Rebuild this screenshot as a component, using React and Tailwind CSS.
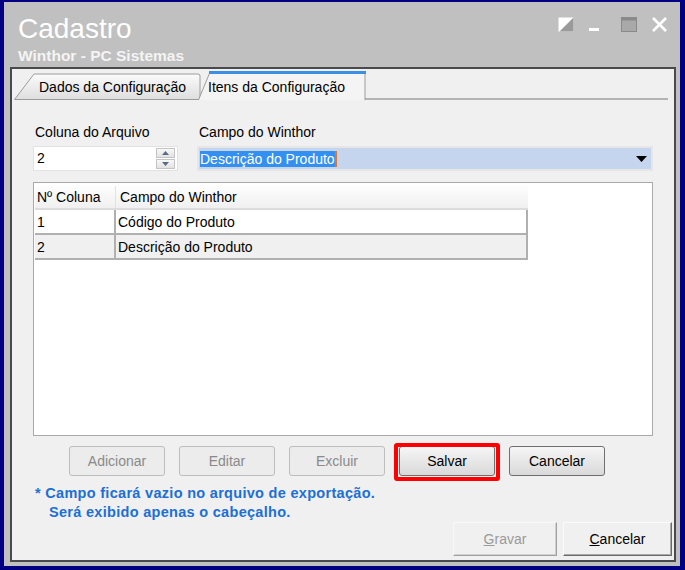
import React from "react";

const font = { fontFamily: '"Liberation Sans", Arial, sans-serif' };

function WindowIcons() {
  return (
    <div className="flex items-start gap-0 pt-[15px] pr-[12px]">
      <svg width="16" height="15" viewBox="0 0 16 15" className="mr-[15px]">
        <rect x="0.5" y="0.5" width="15" height="14" fill="#ffffff" />
        <polygon points="15.5,0.5 15.5,14.5 1.5,14.5" fill="#9a9a9a" />
      </svg>
      <svg width="11" height="15" viewBox="0 0 11 15" className="mr-[21px]">
        <rect x="0" y="11" width="10" height="3" fill="#ffffff" />
      </svg>
      <svg width="16" height="15" viewBox="0 0 16 15" className="mr-[14px]">
        <rect x="0.5" y="0.5" width="15" height="14" fill="#a9a9a9" stroke="#8a8a8a" />
        <rect x="0.5" y="0.5" width="15" height="3" fill="#8a8a8a" />
      </svg>
      <svg width="17" height="15" viewBox="0 0 17 15">
        <path d="M2 1 L15 14 M15 1 L2 14" stroke="#ffffff" strokeWidth="2.6" />
      </svg>
    </div>
  );
}

function Tabs() {
  return (
    <div className="relative flex h-[31px] items-end pl-[2px] pr-[6px]">
      <div className="absolute bottom-0 left-[351px] right-[6px] h-[2px] bg-[#b4b4b4]" />
      <div className="relative h-[27px] w-[188px]">
        <svg className="absolute inset-0" width="188" height="27" viewBox="0 0 188 27">
          <defs>
            <linearGradient id="t1" x1="0" y1="0" x2="0" y2="1">
              <stop offset="0" stopColor="#fbfbfb" />
              <stop offset="1" stopColor="#dedede" />
            </linearGradient>
          </defs>
          <path d="M0.5 26.5 L20 1 L184 1 Q186 1 186 3 L186 26.5 Z" fill="url(#t1)" stroke="#9c9c9c" />
        </svg>
        <span className="relative block pl-[25px] pt-[6px] text-[14px] leading-[17px] text-black">
          Dados da Configuração
        </span>
      </div>
      <div className="relative -ml-[4px] h-[29px] w-[168px]">
        <svg className="absolute inset-0" width="168" height="29" viewBox="0 0 168 29">
          <path d="M0.5 29 L12 1 L167 1 L167 29" fill="#f4f4f4" stroke="#9c9c9c" />
          <rect x="11" y="0" width="157" height="3" fill="#3c8fe3" />
        </svg>
        <span className="relative block pl-[10px] pt-[8px] text-[14px] leading-[17px] text-black">
          Itens da Configuração
        </span>
      </div>
    </div>
  );
}

function GridTable() {
  const rows = [
    ["1", "Código do Produto", "bg-white"],
    ["2", "Descrição do Produto", "bg-[#f0f0f0]"],
  ];
  return (
    <div className="mt-[11px] h-[254px] border border-[#a9a9a9] bg-white pt-[3px] pl-[1px]">
      <div className="w-[493px]">
        <div className="flex h-[24px] border-b-2 border-[#dcdcdc] bg-gradient-to-b from-[#fdfdfd] to-[#f0f0f0] text-[14px] leading-[23px]">
          <div className="w-[81px] border-r border-[#e2e2e2] pl-[2px]">Nº Coluna</div>
          <div className="flex-1 pl-[4px]">Campo do Winthor</div>
        </div>
        {rows.map(([n, c, bg]) => (
          <div key={n} className={`flex h-[25px] border-b-2 border-r-2 border-[#b0b0b0] text-[14px] leading-[24px] ${bg}`}>
            <div className="w-[81px] border-r-2 border-[#b0b0b0] pl-[2px]">{n}</div>
            <div className="flex-1 pl-[2px]">{c}</div>
          </div>
        ))}
      </div>
    </div>
  );
}

function Btn({ children, disabled, className = "" }) {
  return (
    <button
      className={`h-[30px] w-[96px] rounded-[3px] border text-[14px] ${
        disabled
          ? "border-[#bdbdbd] bg-[#ececec] text-[#8a8a8a]"
          : "border-[#6f6f6f] bg-gradient-to-b from-[#f6f6f6] to-[#d9d9d9] text-black"
      } ${className}`}
    >
      {children}
    </button>
  );
}

export default function App() {
  return (
    <div className="h-[570px] w-[685px] bg-[#000080] pt-[2px] pb-[4px] pl-[4px] pr-[5px]" style={font}>
      <div className="flex h-full flex-col bg-[#c0c0c0]">
        <div className="flex h-[65px] items-start justify-between">
          <div className="pl-[14px] pt-[11px] text-white">
            <div className="text-[28px] leading-[32px]">Cadastro</div>
            <div className="mt-[2px] text-[15.5px] font-bold leading-[18px] text-[#f4f4f4]">Winthor - PC Sistemas</div>
          </div>
          <WindowIcons />
        </div>
        <div className="ml-[6px] mr-[4px] flex h-[495px] flex-col border-2 border-[#4a4a4a] bg-[#f0f0f0]">
          <Tabs />
          <div className="flex flex-col px-[21px]">
            <div className="mt-[24px] flex text-[14px] leading-[17px]">
              <div className="w-[164px] pl-[2px]">Coluna do Arquivo</div>
              <div className="pl-[2px]">Campo do Winthor</div>
            </div>
            <div className="mt-[5px] flex h-[25px]">
              <div className="flex w-[145px] items-center border border-[#e2e2e2] bg-white pl-[3px] pr-[2px]">
                <span className="flex-1 text-[14px] leading-[17px]">2</span>
                <div className="flex h-[23px] w-[19px] flex-col gap-[1px] py-[1px]">
                  <div className="flex flex-1 items-center justify-center border border-[#c4c4c4] bg-gradient-to-b from-[#f8f8f8] to-[#e2e2e2]">
                    <svg width="7" height="4" viewBox="0 0 7 4"><polygon points="0,4 7,4 3.5,0" fill="#5a6b86" /></svg>
                  </div>
                  <div className="flex flex-1 items-center justify-center border border-[#c4c4c4] bg-gradient-to-b from-[#f8f8f8] to-[#e2e2e2]">
                    <svg width="7" height="4" viewBox="0 0 7 4"><polygon points="0,0 7,0 3.5,4" fill="#5a6b86" /></svg>
                  </div>
                </div>
              </div>
              <div className="ml-[19px] flex flex-1 items-center border-2 border-[#e6e6e6] bg-[#c6d5ee] pl-[1px] pr-[4px]">
                <span className="flex-1">
                  <span className="border-r-2 border-[#e0762b] bg-[#3390f0] text-[14px] leading-[19px] text-white">Descrição do Produto</span>
                </span>
                <svg width="11" height="6" viewBox="0 0 11 6"><polygon points="0,0 11,0 5.5,6" fill="#000" /></svg>
              </div>
            </div>
            <GridTable />
            <div className="mt-[10px] flex gap-[14px] pl-[36px]">
              <Btn disabled>Adicionar</Btn>
              <Btn disabled>Editar</Btn>
              <Btn disabled>Excluir</Btn>
              <div className="relative">
                <Btn>Salvar</Btn>
                <div className="absolute -inset-x-[5px] -top-[3px] -bottom-[5px] rounded-[3px] border-[4px] border-[#ff0000]" />
              </div>
              <Btn>Cancelar</Btn>
            </div>
            <div className="mt-[8px] text-[14.5px] font-bold leading-[19px] tracking-[0.3px] text-[#1c6fd4]">
              <div className="pl-[2px]">* Campo ficará vazio no arquivo de exportação.</div>
              <div className="pl-[16px]">Será exibido apenas o cabeçalho.</div>
            </div>
          </div>
          <div className="flex justify-end gap-[6px] pr-[2px]">
            <button className="h-[34px] w-[104px] border border-[#f8f8f8] border-b-[#a0a0a0] border-r-[#a0a0a0] bg-[#f0f0f0] text-[14px] text-[#9a9a9a] shadow-[inset_-1px_-1px_0_#d0d0d0]">
              <span className="underline">G</span>ravar
            </button>
            <button className="h-[34px] w-[109px] border border-[#fafafa] border-b-[#6a6a6a] border-r-[#6a6a6a] bg-[#f0f0f0] text-[14px] text-black shadow-[inset_-1px_-1px_0_#a8a8a8]">
              <span className="underline">C</span>ancelar
            </button>
          </div>
        </div>
      </div>
    </div>
  );
}
